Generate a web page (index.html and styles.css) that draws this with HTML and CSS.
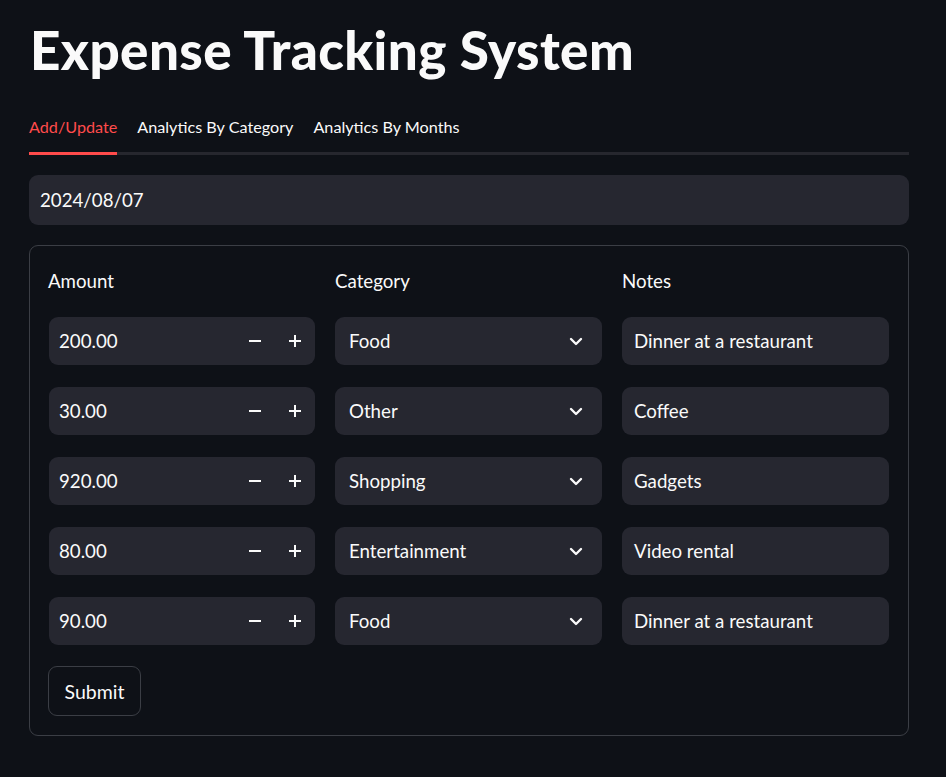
FILE: index.html
```html
<!DOCTYPE html>
<html>
<head>
<meta charset="utf-8">
<link rel="stylesheet" href="styles.css">
</head>
<body>
<main class="main">
  <h1 class="title">Expense Tracking System</h1>
  <div class="tabs">
    <div class="tab active">Add/Update</div>
    <div class="tab">Analytics By Category</div>
    <div class="tab">Analytics By Months</div>
  </div>
  <div class="field date">2024/08/07</div>
  <form class="form">
    <div class="grid">
      <div class="label">Amount</div>
      <div class="label">Category</div>
      <div class="label">Notes</div>

      <div class="field num"><span class="val">200.00</span><span class="step minus"></span><span class="step plus"></span></div>
      <div class="field sel"><span class="val">Food</span><svg class="chev" viewBox="0 0 14 9"><path d="M2 2l5 5 5-5"/></svg></div>
      <div class="field note">Dinner at a restaurant</div>

      <div class="field num"><span class="val">30.00</span><span class="step minus"></span><span class="step plus"></span></div>
      <div class="field sel"><span class="val">Other</span><svg class="chev" viewBox="0 0 14 9"><path d="M2 2l5 5 5-5"/></svg></div>
      <div class="field note">Coffee</div>

      <div class="field num"><span class="val">920.00</span><span class="step minus"></span><span class="step plus"></span></div>
      <div class="field sel"><span class="val">Shopping</span><svg class="chev" viewBox="0 0 14 9"><path d="M2 2l5 5 5-5"/></svg></div>
      <div class="field note">Gadgets</div>

      <div class="field num"><span class="val">80.00</span><span class="step minus"></span><span class="step plus"></span></div>
      <div class="field sel"><span class="val">Entertainment</span><svg class="chev" viewBox="0 0 14 9"><path d="M2 2l5 5 5-5"/></svg></div>
      <div class="field note">Video rental</div>

      <div class="field num"><span class="val">90.00</span><span class="step minus"></span><span class="step plus"></span></div>
      <div class="field sel"><span class="val">Food</span><svg class="chev" viewBox="0 0 14 9"><path d="M2 2l5 5 5-5"/></svg></div>
      <div class="field note">Dinner at a restaurant</div>
    </div>
    <div class="btn">Submit</div>
  </form>
</main>
</body>
</html>
```
FILE: styles.css
```css
html, body {
  margin: 0;
  padding: 0;
  background: #0e1117;
  color: #fafafa;
  font-family: Lato, "Liberation Sans", sans-serif;
}
.main {
  width: 880px;
  padding: 20px 0 0 29px;
}
.title {
  margin: 0;
  font-size: 53px;
  font-weight: 900;
  line-height: 60px;
  padding-left: 1px;
  letter-spacing: 0.4px;
}
.tabs {
  display: flex;
  gap: 20px;
  margin-top: 37px;
  border-bottom: 3px solid #26272e;
}
.tab {
  font-size: 16.2px;
  line-height: 20px;
  padding-bottom: 15px;
  margin-bottom: -3px;
  border-bottom: 3px solid transparent;
}
.tab.active {
  color: #ff4b4b;
  border-bottom-color: #ff4b4b;
}
.field {
  background: #262730;
  border-radius: 9px;
  height: 48px;
  box-sizing: border-box;
  display: flex;
  align-items: center;
  font-size: 18.7px;
}
.date {
  margin-top: 20px;
  height: 50px;
  padding-left: 11px;
}
.form {
  margin: 20px 0 0;
  border: 1px solid #3b3e45;
  border-radius: 9px;
  padding: 19px 19px 19px 18px;
}
.grid {
  display: grid;
  grid-template-columns: repeat(3, 1fr);
  column-gap: 20px;
  row-gap: 22px;
}
.label {
  font-size: 18.7px;
  line-height: 32px;
  margin-bottom: -2px;
}
.num {
  padding: 0 14px 0 10px;
  margin-left: 1px;
}
.num .val {
  flex: 1;
}
.step {
  position: relative;
  width: 12px;
  height: 12px;
  margin-left: 28px;
}
.step::before, .plus::after {
  content: "";
  position: absolute;
  background: #fafafa;
  left: 0;
  top: 5px;
  width: 12px;
  height: 2px;
}
.plus::after {
  left: 5px;
  top: 0;
  width: 2px;
  height: 12px;
}
.sel {
  padding: 0 19px 0 14px;
}
.sel .val {
  flex: 1;
}
.chev {
  width: 14px;
  height: 9px;
  fill: none;
  stroke: #fafafa;
  stroke-width: 2.4;
  stroke-linecap: round;
  stroke-linejoin: round;
}
.note {
  padding-left: 12px;
}
.btn {
  margin-top: 21px;
  width: 93px;
  height: 50px;
  box-sizing: border-box;
  border: 1px solid #3b3e45;
  border-radius: 9px;
  display: flex;
  align-items: center;
  justify-content: center;
  font-size: 19.5px;
}
```
